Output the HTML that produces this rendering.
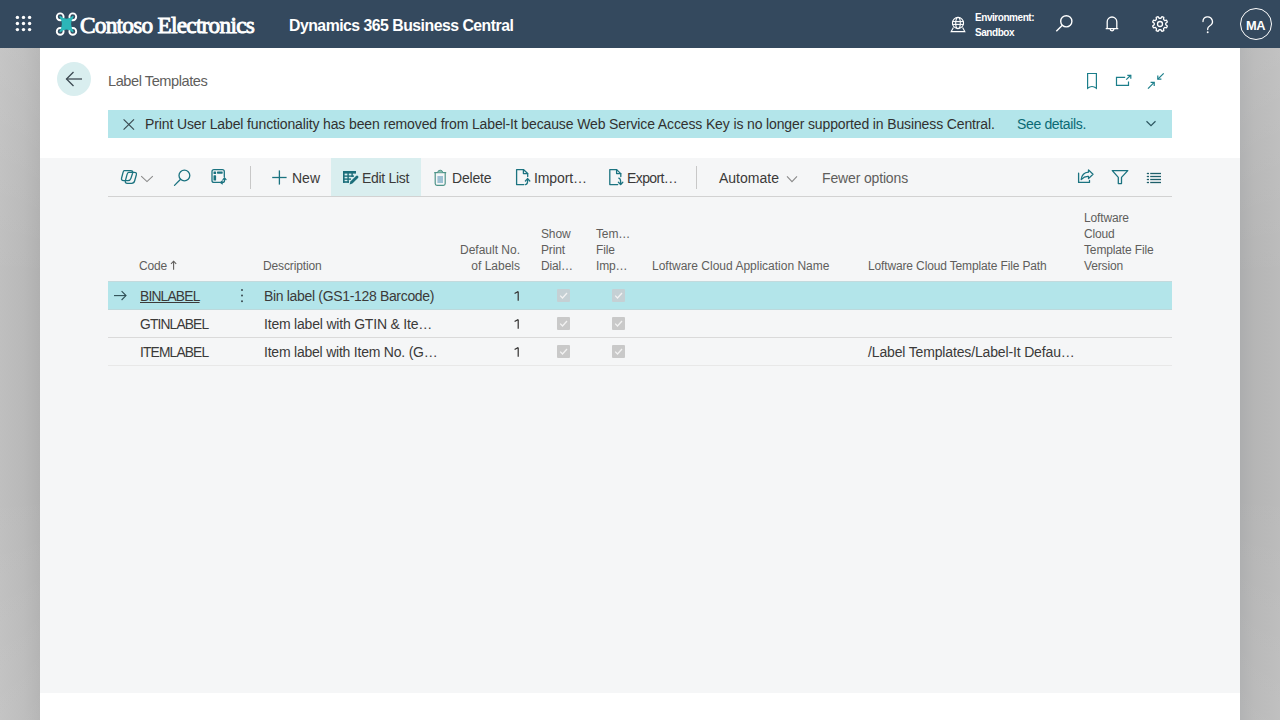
<!DOCTYPE html>
<html><head><meta charset="utf-8">
<style>
*{box-sizing:border-box;margin:0;padding:0}
html,body{width:1280px;height:720px;overflow:hidden;background:#c0c0c0;font-family:"Liberation Sans",sans-serif}
.abs{position:absolute}
#lside{left:0;top:48px;width:40px;height:672px;background:linear-gradient(to bottom,rgba(255,255,255,.1),rgba(255,255,255,0) 35%,rgba(255,255,255,0) 65%,rgba(255,255,255,.08)),linear-gradient(to right,#bfbfbf,#b9b9b9 60%,#b0b0b0)}
#rside{left:1240px;top:48px;width:40px;height:672px;background:linear-gradient(to bottom,rgba(255,255,255,.1),rgba(255,255,255,0) 35%,rgba(255,255,255,0) 65%,rgba(255,255,255,.08)),linear-gradient(to right,#acadae,#b5b5b5 35%,#bbbbbb)}
#top{left:0;top:0;width:1280px;height:48px;background:#34495e}
#panel{left:40px;top:48px;width:1200px;height:672px;background:#fff}
#content{left:40px;top:158px;width:1200px;height:535px;background:#f5f6f7}
.t{position:absolute;white-space:nowrap;line-height:1}
svg{position:absolute;overflow:visible}
.tb{font-size:14px;color:#3b3a39}
.th{font-size:12px;color:#605e5c;letter-spacing:-0.14px}
.td{font-size:14px;color:#3b3a39}
</style></head><body>
<div id="top" class="abs"></div>
<div id="lside" class="abs"></div>
<div id="rside" class="abs"></div>
<div id="panel" class="abs"></div>
<div id="content" class="abs"></div>

<!-- top bar content -->
<svg style="left:0;top:0" width="48" height="48">
<g fill="#fff">
<circle cx="17.4" cy="17.4" r="1.7"/><circle cx="23.5" cy="17.4" r="1.7"/><circle cx="29.6" cy="17.4" r="1.7"/>
<circle cx="17.4" cy="23.5" r="1.7"/><circle cx="23.5" cy="23.5" r="1.7"/><circle cx="29.6" cy="23.5" r="1.7"/>
<circle cx="17.4" cy="29.6" r="1.7"/><circle cx="23.5" cy="29.6" r="1.7"/><circle cx="29.6" cy="29.6" r="1.7"/>
</g></svg>
<svg style="left:0;top:0" width="90" height="48">
<g fill="none" stroke="#fff" stroke-width="1.9">
<circle cx="60.2" cy="16.8" r="3.4"/><circle cx="72.8" cy="16.8" r="3.4"/>
<circle cx="60.2" cy="31.4" r="3.4"/><circle cx="72.8" cy="31.4" r="3.4"/>
</g>
<path d="M60 16.6 Q66.5 22.3 73 16.6 Q67.8 24.1 73 31.6 Q66.5 25.9 60 31.6 Q65.2 24.1 60 16.6Z" fill="#2cb6b8" stroke="#2cb6b8" stroke-width="1.4" stroke-linejoin="round"/>
</svg>
<div class="t" id="brand" style="left:80px;top:14px;font-family:'Liberation Serif',serif;font-weight:normal;font-size:23.3px;color:#fff;letter-spacing:-0.75px;-webkit-text-stroke:0.9px #fff">Contoso Electronics</div>
<div class="t" id="prod" style="left:289px;top:18px;font-weight:bold;font-size:15.8px;color:#fff;letter-spacing:-0.5px">Dynamics 365 Business Central</div>
<svg style="left:945px;top:10px" width="30" height="30">
<g fill="none" stroke="#fff" stroke-width="1.1">
<circle cx="13" cy="13" r="5.6"/>
<ellipse cx="13" cy="13" rx="2.3" ry="5.6"/>
<line x1="7.4" y1="11.6" x2="18.6" y2="11.6"/><line x1="7.4" y1="14.4" x2="18.6" y2="14.4"/>
<path d="M8.4 17.6 L6.2 21.6 H19.8 L17.6 17.6"/>
</g></svg>
<div class="t" id="env1" style="left:975px;top:13px;font-weight:bold;font-size:10px;color:#fff;letter-spacing:-0.45px">Environment:</div>
<div class="t" id="env2" style="left:975px;top:28px;font-weight:bold;font-size:10px;color:#fff;letter-spacing:-0.45px">Sandbox</div>
<svg style="left:1050px;top:10px" width="30" height="30">
<g fill="none" stroke="#fff" stroke-width="1.4">
<circle cx="16.3" cy="11.3" r="5.6"/><line x1="12.3" y1="15.3" x2="6.3" y2="21.3"/>
</g></svg>
<svg style="left:1098px;top:10px" width="30" height="30">
<g fill="none" stroke="#fff" stroke-width="1.3">
<path d="M9.2 18.4 V11.8 A4.8 4.8 0 0 1 18.8 11.8 V18.4 L20.2 18.7 H7.8 Z"/>
<path d="M12.2 19 A1.8 1.8 0 0 0 15.8 19"/>
</g></svg>
<svg style="left:1146px;top:10px" width="30" height="30">
<g fill="none" stroke="#fff" stroke-width="1.3">
<path id="gear" stroke-linejoin="round" d="M19.74 14.82 L21.35 15.95 L20.57 17.82 L18.64 17.48 L17.48 18.64 L17.82 20.57 L15.95 21.35 L14.82 19.74 L13.18 19.74 L12.05 21.35 L10.18 20.57 L10.52 18.64 L9.36 17.48 L7.43 17.82 L6.65 15.95 L8.26 14.82 L8.26 13.18 L6.65 12.05 L7.43 10.18 L9.36 10.52 L10.52 9.36 L10.18 7.43 L12.05 6.65 L13.18 8.26 L14.82 8.26 L15.95 6.65 L17.82 7.43 L17.48 9.36 L18.64 10.52 L20.57 10.18 L21.35 12.05 L19.74 13.18Z"/>
<circle cx="14" cy="14" r="2.5"/>
</g></svg>
<svg style="left:1195px;top:11.6px" width="30" height="30">
<g fill="none" stroke="#fff" stroke-width="1.3" stroke-linecap="round">
<path d="M8 9.6 A4.7 4.7 0 1 1 14.9 13.7 C13.3 14.6 12.7 15.4 12.7 16.8 V17.6"/>
</g><circle cx="12.7" cy="20.3" r="0.95" fill="#fff"/></svg>
<div class="abs" style="left:1240px;top:8px;width:32px;height:32px;border:1.2px solid #fff;border-radius:50%"></div>
<div class="t" id="ma" style="left:1246px;top:20px;font-weight:bold;font-size:12.8px;letter-spacing:-0.3px;color:#fff">MA</div>

<!-- page header -->
<div class="abs" style="left:57px;top:62px;width:34px;height:34px;border-radius:50%;background:#d9eeef"></div>
<svg style="left:57px;top:62px" width="34" height="34">
<g fill="none" stroke="#3d4a52" stroke-width="1.3">
<line x1="9.5" y1="17" x2="25" y2="17"/><path d="M16.5 10 L9.5 17 L16.5 24"/>
</g></svg>
<div class="t" id="title" style="left:108px;top:74px;font-size:14.6px;color:#605e5c;letter-spacing:-0.45px">Label Templates</div>
<svg style="left:1080px;top:66px" width="100" height="30">
<g fill="none" stroke="#1b7e8a" stroke-width="1.2">
<path d="M7.6 7.5 H16.4 V22.2 Q12 18.8 7.6 22.2 Z"/>
<path d="M45.2 11.4 H36.5 V19.4 H48.5 V15.4"/>
<line x1="46.2" y1="13.6" x2="50.8" y2="9.3"/><path d="M47.3 9.3 H50.8 V12.8"/>
<line x1="83.7" y1="7.3" x2="77.8" y2="13.2"/><path d="M77.8 9.6 V13.2 H81.4"/>
<line x1="68" y1="22.6" x2="74.2" y2="16.4"/><path d="M70.6 16.4 H74.2 V20"/>
</g></svg>
<div class="abs" style="left:108px;top:110px;width:1064px;height:28px;background:#b3e5ea"></div>
<svg style="left:118px;top:114px" width="20" height="20">
<g fill="none" stroke="#3a4a50" stroke-width="1.2"><line x1="5.6" y1="5.4" x2="16" y2="15.6"/><line x1="16" y1="5.4" x2="5.6" y2="15.6"/></g></svg>
<div class="t" id="msg" style="left:145px;top:117px;font-size:14px;color:#323130;letter-spacing:-0.13px">Print User Label functionality has been removed from Label-It because Web Service Access Key is no longer supported in Business Central.</div>
<div class="t" id="see" style="left:1017px;top:117px;font-size:14px;color:#0b6a75;letter-spacing:-0.35px">See details.</div>
<svg style="left:1140px;top:114px" width="20" height="20">
<path d="M6.5 7.2 L11 11.6 L15.5 7.2" fill="none" stroke="#2d5560" stroke-width="1.2"/></svg>

<!-- toolbar -->
<div class="abs" style="left:331px;top:158px;width:90px;height:38px;background:#d9eeef"></div>
<div class="abs" style="left:108px;top:196px;width:1064px;height:1px;background:#d2d2d2"></div>
<div class="abs" style="left:250px;top:166px;width:1px;height:23px;background:#c8c8c8"></div>
<div class="abs" style="left:696px;top:166px;width:1px;height:23px;background:#c8c8c8"></div>
<svg style="left:0;top:0" width="1280" height="200">
<g fill="none" stroke="#1b7380" stroke-width="1.3" stroke-linejoin="round" stroke-linecap="round">
<!-- copilot -->
<path d="M124.3 170.6 H130.6 Q133.3 170.6 132.6 173.2 L130.9 178.4 Q130.3 180.6 128 180.6 H123.6 Q120.9 180.6 121.6 178 L123 172.6 Q123.5 170.6 124.3 170.6Z"/>
<path d="M128.6 172.3 H134.2 Q137 172.3 136.3 175 L134.6 181 Q134 183.3 131.7 183.3 H127.4 Q124.7 183.3 125.4 180.7 L127 174.6 Q127.6 172.3 128.6 172.3Z"/>
<!-- search -->
<circle cx="184.4" cy="175.5" r="5.4"/><line x1="180.6" y1="179.3" x2="174.5" y2="185.4"/>
<!-- layout -->
<path d="M219.8 182.4 H214 Q212 182.4 212 180.4 V171.6 Q212 169.6 214 169.6 H222.3 Q224.3 169.6 224.3 171.6 V176.8"/>
<path d="M224.5 178.2 V180.4 Q224.5 182.4 222.5 182.4 H220.8"/>
<path d="M223 179.6 L224.5 178 L226 179.6"/><path d="M222.3 181 L220.6 182.4 L222.3 183.8"/>
<!-- plus -->
<line x1="279.4" y1="170.4" x2="279.4" y2="184.6" stroke-linecap="butt"/><line x1="272.2" y1="177.5" x2="286.6" y2="177.5" stroke-linecap="butt"/>
<!-- import -->
<path d="M523.9 184.6 H516.6 V169.6 H523.4 L527.7 173.6 V176.6"/><path d="M523.4 169.6 V173.6 H527.7"/>
<path d="M525.6 184.6 Q527.6 184.3 527.6 181 V178.8"/><path d="M525.4 181 L527.6 178.6 L529.8 181"/>
<!-- export -->
<path d="M617.7 184.6 H609.8 V169.6 H616.6 L620.8 173.6 V176.6"/><path d="M616.6 169.6 V173.6 H620.8"/>
<path d="M618.8 178.2 Q620.6 178.6 620.6 181.6 V184.4"/><path d="M618.4 182.2 L620.6 184.5 L622.8 182.2"/>
<!-- share -->
<path d="M1078.6 173.2 V182.4 H1089.5 V180.4"/>
<path d="M1088.5 172.2 V169.9 L1093 174.3 L1088.5 178.6 V176.4 Q1084.6 176 1081.2 179.6 Q1082 172.6 1088.5 172.2 Z"/>
<!-- filter -->
<path d="M1112.3 170.6 H1127.8 L1121.5 177.4 V183.6 H1118.3 V177.4 Z"/>
</g>
<g stroke="#1e5f6a" stroke-width="1.3">
<line x1="1146.8" y1="173.5" x2="1149" y2="173.5"/><line x1="1150.2" y1="173.5" x2="1161" y2="173.5"/>
<line x1="1146.8" y1="176.5" x2="1149" y2="176.5"/><line x1="1150.2" y1="176.5" x2="1161" y2="176.5"/>
<line x1="1146.8" y1="179.5" x2="1149" y2="179.5"/><line x1="1150.2" y1="179.5" x2="1161" y2="179.5"/>
<line x1="1146.8" y1="182.5" x2="1149" y2="182.5"/><line x1="1150.2" y1="182.5" x2="1161" y2="182.5"/>
</g>
<!-- chevrons -->
<path d="M141.2 176.2 L147 181.6 L152.8 176.2" fill="none" stroke="#8a8a8a" stroke-width="1.1"/>
<path d="M787 176.4 L792 181.6 L797 176.4" fill="none" stroke="#8a8a8a" stroke-width="1.1"/>
<!-- edit list icon -->
<g fill="#1b6e7a">
<rect x="343" y="171" width="13" height="2.6"/>
<rect x="343" y="171" width="1.6" height="11.8"/>
<rect x="343" y="181.2" width="6" height="1.6"/>
<rect x="343" y="175.4" width="11" height="1.4"/>
<rect x="343" y="178.4" width="8" height="1.4"/>
<rect x="347.4" y="171" width="1.4" height="11.8"/>
<rect x="351.4" y="171" width="1.4" height="6"/>
</g>
<path d="M349.6 184.6 L350.4 181.6 L356 176 Q357 175 358 176 Q359 177 358 178 L352.4 183.6 Z" fill="#1b6e7a"/>
<g fill="#1b7380"><rect x="213.5" y="171.4" width="2.6" height="2.6" rx="0.6"/><rect x="217" y="171.4" width="5.7" height="2.3" rx="0.6"/><rect x="213.5" y="175.3" width="2.6" height="5.3" rx="0.6"/></g>
<!-- trash -->
<rect x="437.4" y="176" width="5.6" height="7" fill="#9cc0d3"/>
<path d="M435.2 173 V183.6 Q435.2 185.4 437 185.4 H443.4 Q445.2 185.4 445.2 183.6 V173" fill="none" stroke="#4f9489" stroke-width="1.2"/>
<path d="M434.2 172.6 H446.2" stroke="#4f9489" stroke-width="1.2"/>
<path d="M437.6 172.6 Q437.8 170.2 440.2 170.2 Q442.6 170.2 442.8 172.6" fill="#8bbfb2" stroke="#4f9489" stroke-width="1"/>
</svg>
<div class="t tb" style="left:292px;top:171px">New</div>
<div class="t tb" style="left:362px;top:171px;letter-spacing:-0.3px">Edit List</div>
<div class="t tb" style="left:452px;top:171px;letter-spacing:-0.2px">Delete</div>
<div class="t tb" style="left:534px;top:171px;letter-spacing:-0.1px">Import…</div>
<div class="t tb" style="left:627px;top:171px;letter-spacing:-0.6px">Export…</div>
<div class="t tb" style="left:719px;top:171px">Automate</div>
<div class="t tb" style="left:822px;top:171px;color:#605e5c;letter-spacing:-0.15px">Fewer options</div>

<!-- table header -->
<div class="t th" style="left:139px;top:260px">Code</div>
<svg style="left:168px;top:258px" width="12" height="14"><g fill="none" stroke="#605e5c" stroke-width="1.1"><line x1="5.6" y1="3.2" x2="5.6" y2="11.8"/><path d="M3 5.8 L5.6 3.2 L8.2 5.8"/></g></svg>
<div class="t th" style="left:263px;top:260px">Description</div>
<div class="t th" style="left:420px;top:244px;width:100px;text-align:right;letter-spacing:0">Default No.</div>
<div class="t th" style="left:420px;top:260px;width:100px;text-align:right;letter-spacing:0">of Labels</div>
<div class="t th" style="left:541px;top:228px">Show</div>
<div class="t th" style="left:541px;top:244px">Print</div>
<div class="t th" style="left:541px;top:260px">Dial…</div>
<div class="t th" style="left:596px;top:228px">Tem…</div>
<div class="t th" style="left:596px;top:244px">File</div>
<div class="t th" style="left:596px;top:260px">Imp…</div>
<div class="t th" style="left:652px;top:260px;letter-spacing:0">Loftware Cloud Application Name</div>
<div class="t th" style="left:868px;top:260px">Loftware Cloud Template File Path</div>
<div class="t th" style="left:1084px;top:212px">Loftware</div>
<div class="t th" style="left:1084px;top:228px">Cloud</div>
<div class="t th" style="left:1084px;top:244px">Template File</div>
<div class="t th" style="left:1084px;top:260px">Version</div>
<!-- rows -->
<div class="abs" style="left:108px;top:281px;width:1064px;height:29px;background:#b3e5ea;border-top:1px solid #c3dadd;border-bottom:1px solid #bcd9dc"></div>
<div class="abs" style="left:108px;top:337px;width:1064px;height:1px;background:#dadada"></div>
<div class="abs" style="left:108px;top:365px;width:1064px;height:1px;background:#e8e8e8"></div>
<svg style="left:108px;top:285px" width="24" height="20"><g fill="none" stroke="#2f4f55" stroke-width="1.1"><line x1="6" y1="10.6" x2="18" y2="10.6"/><path d="M13.6 6.2 L18 10.6 L13.6 15"/></g></svg>
<div class="t td" style="left:140px;top:290px;font-size:13.8px;text-decoration:underline;letter-spacing:-0.8px">BINLABEL</div>
<svg style="left:236px;top:285px" width="12" height="20"><g fill="#3a4a50"><circle cx="6" cy="5" r="1"/><circle cx="6" cy="10.6" r="1"/><circle cx="6" cy="16.2" r="1"/></g></svg>
<div class="t td" style="left:264px;top:289px;letter-spacing:-0.33px">Bin label (GS1-128 Barcode)</div>
<svg style="left:510px;top:289px" width="12" height="14"><path d="M8.2 2.4 V11.8 M8.2 2.4 L4.6 4.6" fill="none" stroke="#323130" stroke-width="1.2"/></svg>
<div class="t td" style="left:140px;top:318px;font-size:13.8px;letter-spacing:-0.85px">GTINLABEL</div>
<div class="t td" style="left:264px;top:317px;letter-spacing:-0.2px">Item label with GTIN &amp; Ite…</div>
<svg style="left:510px;top:317px" width="12" height="14"><path d="M8.2 2.4 V11.8 M8.2 2.4 L4.6 4.6" fill="none" stroke="#323130" stroke-width="1.2"/></svg>
<div class="t td" style="left:140px;top:346px;font-size:13.8px;letter-spacing:-0.85px">ITEMLABEL</div>
<div class="t td" style="left:264px;top:345px;letter-spacing:-0.22px">Item label with Item No. (G…</div>
<svg style="left:510px;top:345px" width="12" height="14"><path d="M8.2 2.4 V11.8 M8.2 2.4 L4.6 4.6" fill="none" stroke="#323130" stroke-width="1.2"/></svg>
<div class="t td" style="left:868px;top:345px;letter-spacing:-0.15px">/Label Templates/Label-It Defau…</div>
<svg style="left:557px;top:289px" width="13" height="13"><rect x="0" y="0" width="13" height="13" rx="1" fill="#c5d0d4"/><path d="M3.2 6.6 L5.5 9 L10 4" fill="none" stroke="#f2f2f2" stroke-width="1.3"/></svg>
<svg style="left:612px;top:289px" width="13" height="13"><rect x="0" y="0" width="13" height="13" rx="1" fill="#c5d0d4"/><path d="M3.2 6.6 L5.5 9 L10 4" fill="none" stroke="#f2f2f2" stroke-width="1.3"/></svg>
<svg style="left:557px;top:317px" width="13" height="13"><rect x="0" y="0" width="13" height="13" rx="1" fill="#c9c9c9"/><path d="M3.2 6.6 L5.5 9 L10 4" fill="none" stroke="#f2f2f2" stroke-width="1.3"/></svg>
<svg style="left:612px;top:317px" width="13" height="13"><rect x="0" y="0" width="13" height="13" rx="1" fill="#c9c9c9"/><path d="M3.2 6.6 L5.5 9 L10 4" fill="none" stroke="#f2f2f2" stroke-width="1.3"/></svg>
<svg style="left:557px;top:345px" width="13" height="13"><rect x="0" y="0" width="13" height="13" rx="1" fill="#c9c9c9"/><path d="M3.2 6.6 L5.5 9 L10 4" fill="none" stroke="#f2f2f2" stroke-width="1.3"/></svg>
<svg style="left:612px;top:345px" width="13" height="13"><rect x="0" y="0" width="13" height="13" rx="1" fill="#c9c9c9"/><path d="M3.2 6.6 L5.5 9 L10 4" fill="none" stroke="#f2f2f2" stroke-width="1.3"/></svg>
</body></html>
